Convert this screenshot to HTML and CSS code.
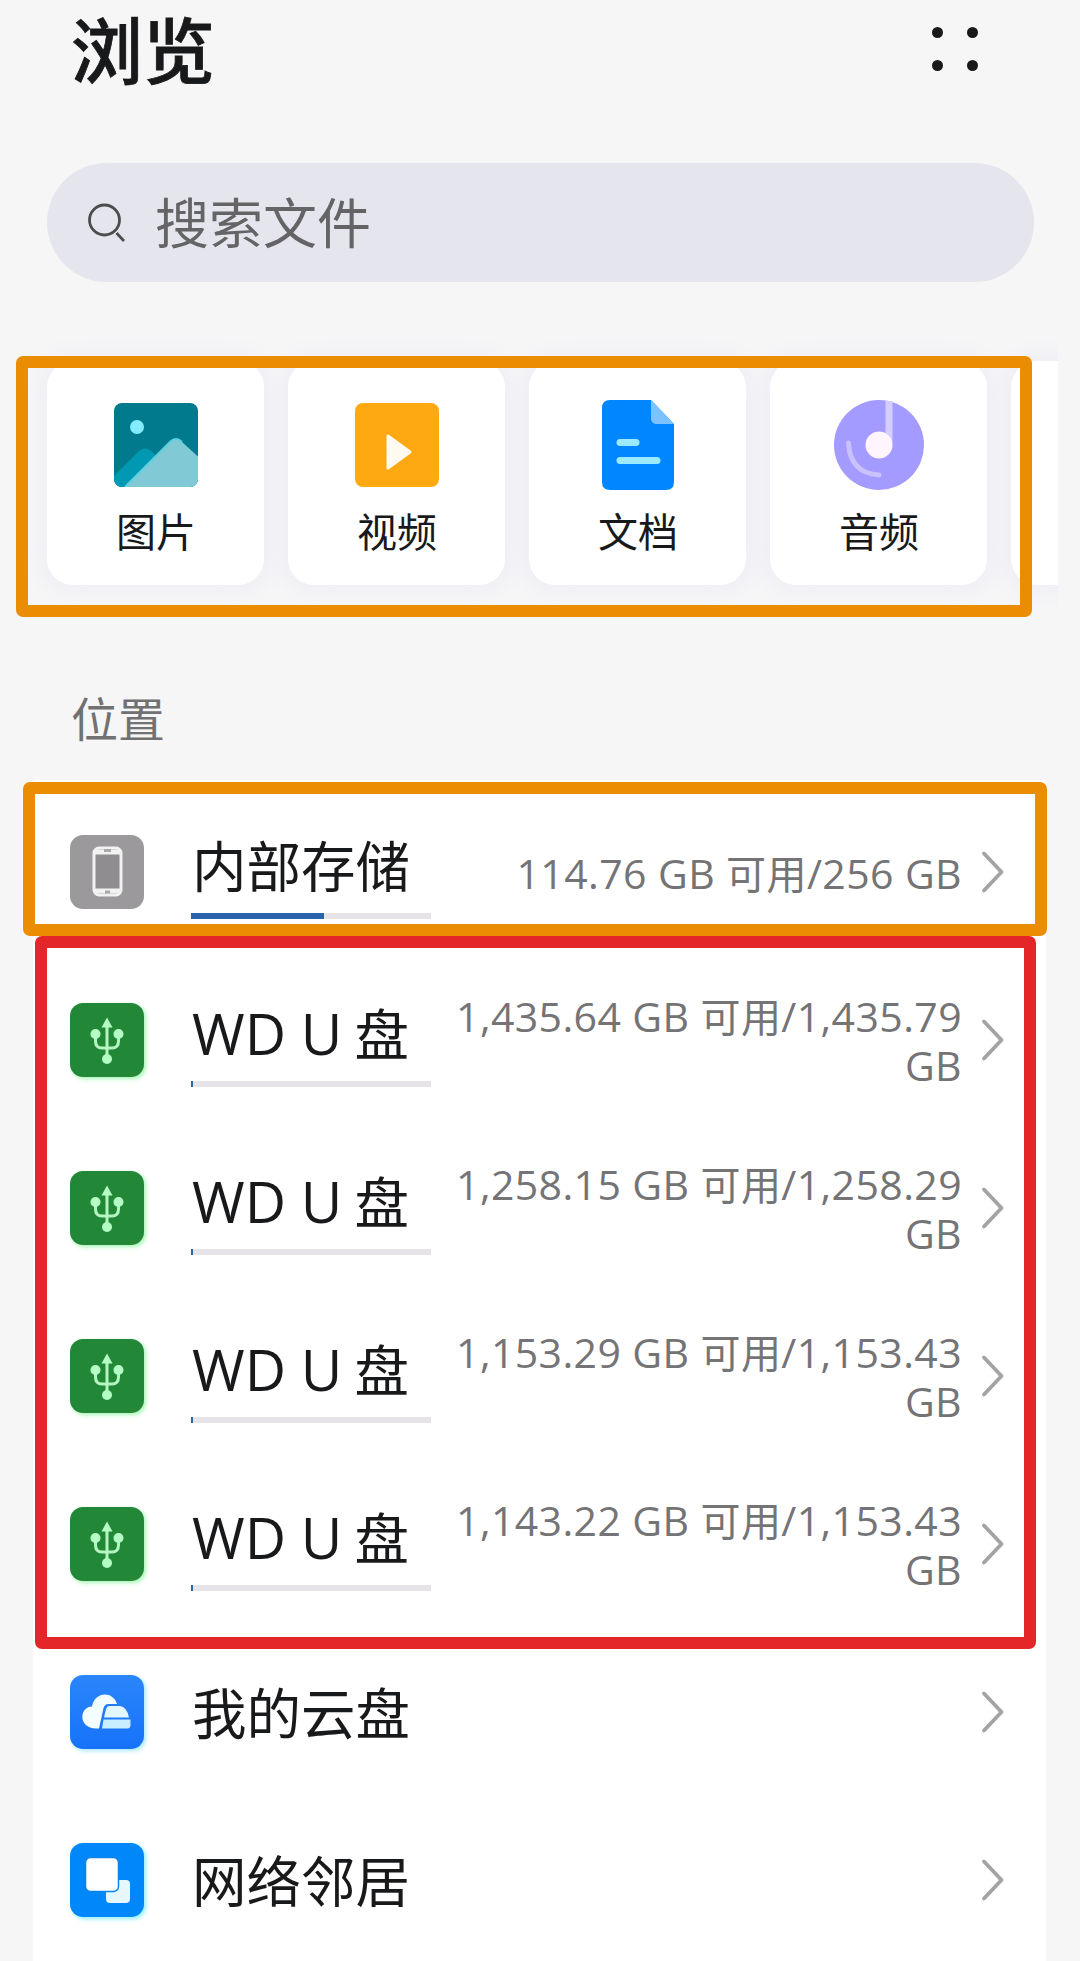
FILE: index.html
```html
<!DOCTYPE html>
<html lang="zh-CN">
<head>
    <meta charset="UTF-8">
    <meta name="viewport" content="width=device-width, initial-scale=1.0">
    <title>浏览</title>
    <link rel="stylesheet" href="styles.css">
</head>
<body>
    <!-- Shared icons -->
    <svg class="defs" width="0" height="0">
        <symbol id="chevron" viewBox="0 0 24 44">
            <path d="M3 3.500 L20.5 22 L3 40.500" fill="none" stroke="#a3a3a3" stroke-width="3.800" stroke-linecap="round" stroke-linejoin="round"/>
        </symbol>
        <symbol id="usb" viewBox="0 0 74 74">
            <g fill="none" stroke="#b4f5c0" stroke-width="3">
                <path d="M37 22 V56"/>
                <path d="M25.500 32 V38 Q25.500 45 32 45 H42 Q48.500 45 48.500 38 V32"/>
            </g>
            <g fill="#b4ffc4">
                <path d="M37 14.500 L42.500 24.500 H31.500 Z"/>
                <circle cx="25.500" cy="31" r="5"/>
                <circle cx="48.500" cy="31" r="5"/>
                <circle cx="37" cy="56" r="5"/>
            </g>
        </symbol>
    </svg>

    <header class="header">
        <h1>浏览</h1>
        <div class="menu"><i></i><i></i><i></i><i></i></div>
    </header>

    <div class="search">
        <svg width="40" height="40" viewBox="0 0 40 40" fill="none" stroke="#4c4c4f" stroke-width="2.8">
            <circle cx="18.500" cy="17" r="15"/>
            <path d="M30.500 30 L38 38"/>
        </svg>
        <span>搜索文件</span>
    </div>

    <section class="categories">
        <div class="strip">
            <div class="card">
                <svg width="90" height="92" viewBox="0 0 90 92">
                    <clipPath id="pic"><rect x="3" y="4" width="84" height="84" rx="8"/></clipPath>
                    <g clip-path="url(#pic)">
                        <rect x="3" y="4" width="84" height="84" fill="#007a8c"/>
                        <path d="M0 80 L28 52 Q34 47 40 52 L60 72 L40 92 H0 Z" fill="#0098b2"/>
                        <path d="M14 88 L59 43 Q65 37 71 43 L92 62 V92 H10 Z" fill="#80c9d5"/>
                        <path d="M14 88 L59 43 Q65 37 71 43" fill="none" stroke="#5fd0e2" stroke-width="2"/>
                    </g>
                    <circle cx="26" cy="28" r="7" fill="#83ecff"/>
                </svg>
                <span>图片</span>
            </div>
            <div class="card">
                <svg width="90" height="92" viewBox="0 0 90 92">
                    <rect x="3" y="4" width="84" height="84" rx="8" fill="#ffa912"/>
                    <path d="M36 37 L58 53 L36 69 Z" fill="#fffaf0" stroke="#fffaf0" stroke-width="3" stroke-linejoin="round"/>
                </svg>
                <span>视频</span>
            </div>
            <div class="card">
                <svg width="90" height="92" viewBox="0 0 90 92">
                    <path d="M17 1 H58 L81 25 V83 Q81 91 73 91 H17 Q9 91 9 83 V9 Q9 1 17 1 Z" fill="#0086ff"/>
                    <path d="M58 1 L81 25 H64 Q58 25 58 19 Z" fill="#7cc2ff"/>
                    <g stroke="#9beaff" stroke-width="7" stroke-linecap="round">
                        <path d="M27 43.500 H43"/>
                        <path d="M27 61.500 H64"/>
                    </g>
                </svg>
                <span>文档</span>
            </div>
            <div class="card">
                <svg width="90" height="92" viewBox="0 0 90 92">
                    <circle cx="45" cy="46" r="45" fill="#a39bff"/>
                    <path d="M55 2 V44" stroke="#d4ceff" stroke-width="7"/>
                    <circle cx="45" cy="46" r="13.500" fill="#fff5ff"/>
                    <path d="M14.500 44 Q16 74 45 76" fill="none" stroke="#c9c2ff" stroke-width="5" stroke-linecap="round"/>
                </svg>
                <span>音频</span>
            </div>
            <div class="card"></div>
        </div>
        <div class="frame frame-categories"></div>
    </section>

    <h2>位置</h2>

    <section class="list">
        <div class="row">
            <div class="icon gray">
                <svg width="74" height="74" viewBox="0 0 74 74">
                    <rect x="24" y="13" width="27" height="47" rx="5" fill="#8f8d8f" stroke="#f2f2f2" stroke-width="3"/>
                    <path d="M24 17 H51 M24 56 H51" stroke="#f2f2f2" stroke-width="5"/>
                    <path d="M34 15.500 H41 M35 57 H40" stroke="#aaa" stroke-width="3"/>
                </svg>
            </div>
            <div class="name">内部存储<div class="bar"><div style="width: 55.600%"></div></div></div>
            <div class="size">114.76 GB <b>可用</b>/256 GB</div>
            <svg class="chevron"><use href="#chevron"/></svg>
        </div>
        <div class="row">
            <div class="icon green"><svg width="74" height="74"><use href="#usb"/></svg></div>
            <div class="name"><span class="latin">WD U</span> 盘<div class="bar"><div style="width: 1%"></div></div></div>
            <div class="size">1,435.64 GB <b>可用</b>/1,435.79<br>GB</div>
            <svg class="chevron"><use href="#chevron"/></svg>
        </div>
        <div class="row">
            <div class="icon green"><svg width="74" height="74"><use href="#usb"/></svg></div>
            <div class="name"><span class="latin">WD U</span> 盘<div class="bar"><div style="width: 1%"></div></div></div>
            <div class="size">1,258.15 GB <b>可用</b>/1,258.29<br>GB</div>
            <svg class="chevron"><use href="#chevron"/></svg>
        </div>
        <div class="row">
            <div class="icon green"><svg width="74" height="74"><use href="#usb"/></svg></div>
            <div class="name"><span class="latin">WD U</span> 盘<div class="bar"><div style="width: 1%"></div></div></div>
            <div class="size">1,153.29 GB <b>可用</b>/1,153.43<br>GB</div>
            <svg class="chevron"><use href="#chevron"/></svg>
        </div>
        <div class="row">
            <div class="icon green"><svg width="74" height="74"><use href="#usb"/></svg></div>
            <div class="name"><span class="latin">WD U</span> 盘<div class="bar"><div style="width: 1%"></div></div></div>
            <div class="size">1,143.22 GB <b>可用</b>/1,153.43<br>GB</div>
            <svg class="chevron"><use href="#chevron"/></svg>
        </div>
        <div class="row">
            <div class="icon blue">
                <svg width="74" height="74" viewBox="0 0 74 74">
                    <path d="M26 53.500 C8 53 9 32 22 31.500 C25 16 43 16 47 29 H38 Q35 29 33.500 33 L29 53.500 Z" fill="#f4fdff"/>
                    <path d="M39 31 H50 Q57 32 59 42.500 H34 L36 34 Q37 31 39 31 Z" fill="#e2f7ff"/>
                    <path d="M33.500 44.500 H60.500 V50 Q60.500 53.500 57 53.500 H32 Z" fill="#c8eeff"/>
                </svg>
            </div>
            <div class="name plain">我的云盘</div>
            <svg class="chevron"><use href="#chevron"/></svg>
        </div>
        <div class="row">
            <div class="icon sky">
                <svg width="74" height="74" viewBox="0 0 74 74">
                    <rect x="36" y="37" width="24" height="23" rx="4" fill="#e6f7ff"/>
                    <rect x="15.500" y="14.500" width="33" height="34" rx="5" fill="#fff" stroke="#0a84e8" stroke-width="1.500"/>
                </svg>
            </div>
            <div class="name plain">网络邻居</div>
            <svg class="chevron"><use href="#chevron"/></svg>
        </div>
        <div class="frame frame-internal"></div>
        <div class="frame frame-usb"></div>
    </section>
</body>
</html>
```
FILE: styles.css
```css
* {
    box-sizing: border-box;
}
body {
    font-family: "Noto Sans CJK SC", sans-serif;
    margin: 0;
    width: 1080px;
    height: 1961px;
    overflow: hidden;
    background-color: #f6f6f7;
    color: #18191b;
}
svg {
    display: block;
}
.defs {
    position: absolute;
}
.header {
    display: flex;
    justify-content: space-between;
    align-items: center;
    height: 100px;
    padding: 0 102px 0 71px;
}
h1 {
    margin: 0 0 7px;
    font-size: 72px;
    font-weight: 500;
    line-height: 93px;
    -webkit-text-stroke: 0.8px #18191b;
}
.menu {
    display: grid;
    grid-template-columns: 11px 11px;
    gap: 22px 24px;
    margin-bottom: 3px;
}
.menu i {
    width: 11px;
    height: 11px;
    border-radius: 50%;
    background-color: #18191b;
}
.search {
    display: flex;
    align-items: center;
    gap: 29px;
    width: 987px;
    height: 119px;
    margin: 63px 0 0 47px;
    padding-left: 39px;
    border-radius: 60px;
    background-color: #e5e5ee;
    color: #646466;
    font-size: 54px;
    line-height: 119px;
}
.search span {
    margin-bottom: 4px;
}
.categories {
    position: relative;
    margin-top: 54px;
}
.strip {
    display: flex;
    gap: 24px;
    width: 1058px;
    height: 271px;
    padding: 25px 0 0 47px;
    overflow: hidden;
}
.card {
    display: flex;
    flex: none;
    flex-direction: column;
    align-items: center;
    width: 217px;
    height: 224px;
    padding: 38px 0 0 1px;
    border-radius: 26px;
    background-color: #fff;
    box-shadow: 0 0 20px 7px #eeeef5;
    font-size: 40px;
}
.card span {
    margin-top: 11px;
    line-height: 56px;
}
/* Highlight frames drawn over the content */
.frame {
    position: absolute;
    border: 12px solid #ea8d03;
    border-radius: 7px;
}
.frame-categories {
    left: 16px;
    top: 20px;
    width: 1016px;
    height: 261px;
}
.frame-internal {
    left: -10px;
    top: 2px;
    width: 1024px;
    height: 154px;
}
.frame-usb {
    left: 2px;
    top: 156px;
    width: 1001px;
    height: 713px;
    border-color: #e52629;
}
h2 {
    margin: 75px 0 0 71px;
    color: #717173;
    font-size: 47px;
    font-weight: 400;
    line-height: 70px;
}
.list {
    position: relative;
    width: 1013px;
    margin: 28px 0 0 33px;
    padding-top: 8px;
    background-color: #fff;
}
.row {
    display: flex;
    align-items: center;
    height: 168px;
    padding: 0 41px 0 37px;
}
.icon {
    flex: none;
    width: 74px;
    height: 74px;
    border-radius: 13px;
}
.gray {
    background-color: #9b999b;
}
.green {
    background-color: #228838;
    box-shadow: 2px 2px 4px #a5f5b5;
}
.blue {
    background: linear-gradient(#2b86fb, #1672fa);
    box-shadow: 2px 2px 4px #a8eaff;
}
.sky {
    background-color: #0088fa;
    box-shadow: 2px 2px 4px #8eeeff;
}
.name {
    flex: none;
    width: 240px;
    margin-left: 47px;
    padding-left: 1px;
    font-size: 54.500px;
    line-height: 76px;
    white-space: nowrap;
}
.name.plain {
    width: 300px;
    padding-bottom: 3px;
}
.latin {
    font-family: "Open Sans", sans-serif;
    font-size: 57px;
    line-height: 1;
}
.bar {
    height: 6px;
    margin: 11px 0 0 -1px;
    background-color: #e6e4e8;
}
.bar div {
    height: 6px;
    background-color: #2b62ae;
}
.size {
    flex: 1;
    padding-top: 2px;
    color: #747476;
    font-family: "Open Sans", "Noto Sans CJK SC", sans-serif;
    font-size: 41px;
    letter-spacing: 0.400px;
    line-height: 49px;
    text-align: right;
    white-space: nowrap;
}
.size b {
    font-size: 40px;
    font-weight: 400;
}
.chevron {
    flex: none;
    width: 24px;
    height: 44px;
    margin-left: 19px;
}
.plain + .chevron {
    margin-left: auto;
}
```
